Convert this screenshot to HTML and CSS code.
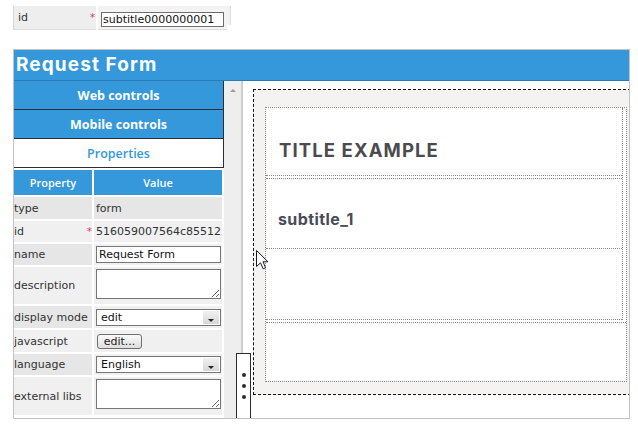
FILE: index.html
```html
<!DOCTYPE html>
<html>
<head>
<meta charset="utf-8">
<link rel="stylesheet" href="styles.css">
</head>
<body>
<div class="topbar">
  <div class="tb-label">id<span class="req">*</span></div>
  <div class="tb-value"><div class="field">subtitle0000000001</div></div>
  <div class="tb-next"></div>
</div>
<div class="panel">
  <div class="panel-head">Request Form</div>
  <div class="panel-body">
    <div class="side">
      <div class="tab">Web controls</div>
      <div class="tab">Mobile controls</div>
      <div class="tab active">Properties</div>
      <div class="props">
        <div class="ph">Property</div><div class="ph">Value</div>

        <div class="l dk">type</div><div class="v dk txt">form</div>

        <div class="l lt req-cell">id<span class="req">*</span></div><div class="v lt txt">516059007564c85512</div>

        <div class="l dk">name</div><div class="v lt"><div class="inp">Request Form</div></div>

        <div class="l lt">description</div><div class="v lt top"><textarea class="ta" readonly></textarea></div>

        <div class="l dk">display mode</div><div class="v lt"><div class="sel"><span class="sel-txt">edit</span><span class="sel-btn"><i></i></span></div></div>

        <div class="l lt">javascript</div><div class="v lt"><div class="btn">edit...</div></div>

        <div class="l dk">language</div><div class="v lt"><div class="sel"><span class="sel-txt">English</span><span class="sel-btn"><i></i></span></div></div>

        <div class="l lt">external libs</div><div class="v lt top"><textarea class="ta" readonly></textarea></div>
      </div>
    </div>
    <div class="scroll"><span class="arrow"></span></div>
    <div class="canvas">
      <div class="dash">
        <div class="zone">
          <div class="group">
            <div class="row r1"><span class="title">TITLE EXAMPLE</span></div>
            <div class="row r2"><span class="sub">subtitle_1</span></div>
            <div class="row r3"></div>
          </div>
          <div class="row r4"></div>
        </div>
      </div>
    </div>
    <div class="handle"><i></i><i></i><i></i></div>
    <svg class="cursor" width="13" height="20" viewBox="0 0 13 20">
      <path d="M0.5 0.5 L0.5 16.5 L4.5 12.8 L7.2 18.8 L9.6 17.8 L7 11.8 L12 11.8 Z" fill="#fff" stroke="#1b1b2b" stroke-width="1" stroke-linejoin="miter"/>
    </svg>
  </div>
</div>
</body>
</html>
```

FILE: styles.css
```css
* { box-sizing: content-box; }
body {
  margin: 0;
  background: #fff;
  font-family: "DejaVu Sans", Verdana, sans-serif;
  font-size: 11px;
  color: #333;
}

/* top row */
.topbar {
  display: flex;
  margin: 5px 0 0 13px;
  height: 24px;
  padding-top: 1px;
  border-left: 1px solid #d8d8d8;
}
.tb-label {
  position: relative;
  width: 78px;
  height: 23px;
  padding-left: 4px;
  line-height: 23px;
  background: #eeeeee;
  border-bottom: 1px solid #dcdcdc;
  color: #333;
}
.req {
  position: absolute;
  left: 76px;
  top: 0;
  color: #e8336b;
  font-size: 10px;
}
.tb-value {
  width: 126px;
  height: 23px;
  margin-left: 2px;
  padding-left: 3px;
  background: #f3f3f3;
  border-bottom: 1px solid #dcdcdc;
}
.field {
  margin-top: 6px;
  width: 120px;
  height: 13px;
  padding-left: 1px;
  border: 1px solid #6e6e6e;
  line-height: 13px;
  color: #111;
  background: #fff;
}
.tb-next {
  width: 3px;
  height: 19px;
  background: #f2f2f2;
  border-right: 1px solid #dedede;
}

/* panel */
.panel {
  margin: 19px 0 0 13px;
  width: 615px;
  height: 368px;
  border: 1px solid #c3c3c3;
}
.panel-head {
  height: 30px;
  background: #3498db;
  border-bottom: 1px solid #2a7ab3;
  color: #fff;
  font-family: Inter, "Open Sans", sans-serif;
  font-weight: 700;
  font-size: 19px;
  letter-spacing: 1.1px;
  line-height: 30px;
  padding-left: 2px;
}
.panel-body {
  position: relative;
  display: flex;
  height: 337px;
  overflow: hidden;
}
.side {
  width: 210px;
  flex: none;
}
.tab {
  height: 27px;
  padding-top: 1px;
  background: #3498db;
  border-right: 1px solid #2b2d3b;
  border-bottom: 1px solid #2b2d3b;
  color: #fff;
  text-align: center;
  font-family: "Open Sans", sans-serif;
  font-weight: 700;
  font-size: 12.5px;
  line-height: 28px;
}
.tab.active {
  background: #fff;
  color: #3498db;
  font-weight: 600;
}
.props {
  margin-top: 2px;
  display: grid;
  grid-template-columns: 78px 128px;
  grid-template-rows: 25px 22px 21px 21px 37px 22px 22px 21px 38px;
  column-gap: 2px;
  row-gap: 2px;
}
.ph {
  background: #3498db;
  color: #fff;
  text-align: center;
  font-family: "Open Sans", sans-serif;
  font-weight: 600;
  font-size: 11px;
  line-height: 26px;
}
.l, .v {
  display: flex;
  align-items: center;
  color: #333;
}
.l { position: relative; }
.l .req { left: 73px; top: 5px; }
.v { padding-left: 2px; }
.v.top { align-items: flex-start; }
.dk { background: #e6e6e6; }
.lt { background: #f0f0f0; }

.inp {
  width: 121px;
  height: 15px;
  padding-left: 2px;
  border: 1px solid #767676;
  background: #fff;
  line-height: 15px;
  color: #111;
}
.ta {
  display: block;
  margin: 2px 0 0 0;
  width: 125px;
  height: 30px;
  box-sizing: border-box;
  border: 1px solid #767676;
  background: #fff;
  padding: 0;
  font: inherit;
  resize: both;
  outline: none;
}
.sel {
  display: flex;
  align-items: center;
  width: 123px;
  height: 15px;
  border: 1px solid #767676;
  background: #fff;
}
.sel-txt {
  flex: 1;
  padding-left: 4px;
  color: #111;
  line-height: 15px;
}
.sel-btn {
  position: relative;
  width: 16px;
  height: 13px;
  margin-right: 1px;
  background: linear-gradient(#f1f1f1, #d6d6d6);
  border-radius: 1px;
}
.sel-btn i {
  position: absolute;
  left: 5px;
  bottom: 2px;
  width: 0;
  height: 0;
  border-left: 3px solid transparent;
  border-right: 3px solid transparent;
  border-top: 3px solid #222;
}
.btn {
  margin-left: 1px;
  width: 43px;
  height: 13px;
  border: 1px solid #6f6f6f;
  border-radius: 3px;
  background: linear-gradient(#fafafa, #dedede);
  text-align: center;
  line-height: 13px;
  color: #222;
}

/* scroll column */
.scroll {
  position: relative;
  flex: none;
  width: 17px;
  background: #eeeeee;
  border-right: 2px solid #cdcdcd;
}
.arrow {
  position: absolute;
  left: 6px;
  top: 8px;
  width: 0;
  height: 0;
  border-left: 3px solid transparent;
  border-right: 3px solid transparent;
  border-bottom: 3px solid #9a9a9a;
}

/* canvas */
.canvas {
  flex: 1;
  background: #fff;
  overflow: hidden;
}
.dash {
  margin: 8px 0 0 10px;
  width: 420px;
  padding: 17px 0 12px 11px;
  border: 1px dashed #111;
  background: #f4f3f2;
}
.zone {
  width: 360px;
  border: 1px dotted #8a8a8a;
  background: #fff;
}
.group {
  margin-right: 3px;
  border-right: 1px dotted #8a8a8a;
}
.row {
  display: flex;
  align-items: center;
}
.r1 {
  height: 51px;
  padding: 16px 0 0 13px;
  border-bottom: 1px dotted #8a8a8a;
}
.r2 {
  margin-top: 2px;
  height: 59px;
  padding: 10px 0 0 12px;
  border-top: 1px dotted #8a8a8a;
  border-bottom: 1px dotted #8a8a8a;
}
.r3 {
  height: 70px;
  border-bottom: 1px dotted #8a8a8a;
}
.r4 {
  margin-top: 2px;
  height: 58px;
  border-top: 1px dotted #8a8a8a;
}
.title {
  font-family: Inter, "Open Sans", sans-serif;
  font-weight: 700;
  font-size: 18.5px;
  letter-spacing: 1.1px;
  color: #4b4b4e;
}
.sub {
  font-family: Inter, "Open Sans", sans-serif;
  font-weight: 700;
  font-size: 16px;
  letter-spacing: 0.4px;
  color: #4a4a58;
}

/* overlays */
.handle {
  position: absolute;
  left: 222px;
  top: 272px;
  bottom: -2px;
  width: 13px;
  border: 1px solid #2b2b35;
  background: #fff;
  display: flex;
  flex-direction: column;
  align-items: center;
  padding-top: 19px;
  gap: 7px;
}
.handle i {
  display: block;
  width: 4px;
  height: 4px;
  border-radius: 50%;
  background: #2b2b35;
}
.cursor {
  position: absolute;
  left: 242px;
  top: 169px;
}
```
